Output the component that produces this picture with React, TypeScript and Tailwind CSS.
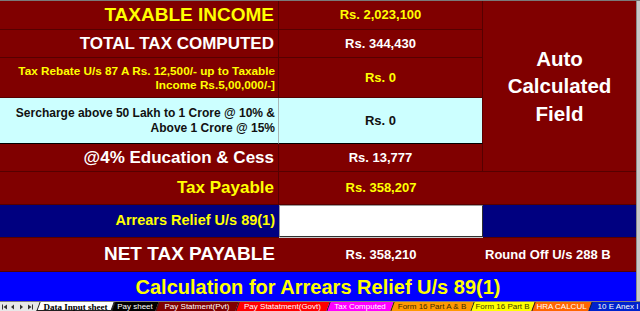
import React from "react";

const tabs: { label: string; w: string; bg: string; fg: string }[] = [
  { label: "Pay sheet", w: "w-[44px]", bg: "bg-black", fg: "text-white" },
  { label: "Pay Statment(Pvt)", w: "w-[80px]", bg: "bg-[#800000]", fg: "text-white" },
  { label: "Pay Statatment(Govt)", w: "w-[91px]", bg: "bg-[#ff0000]", fg: "text-white" },
  { label: "Tax Computed", w: "w-[64px]", bg: "bg-[#ff00ff]", fg: "text-white" },
  { label: "Form 16 Part A & B", w: "w-[80px]", bg: "bg-[#ff9900]", fg: "text-[#3a2a00]" },
  { label: "Form 16 Part B", w: "w-[61px]", bg: "bg-[#ffff00]", fg: "text-[#3a3a00]" },
  { label: "HRA CALCUL", w: "w-[57px]", bg: "bg-[#ff6600]", fg: "text-white" },
  { label: "10 E Anex I", w: "w-[56px]", bg: "bg-[#0022cc]", fg: "text-white" },
];

function Tab({ label, w, bg, fg }: { label: string; w: string; bg: string; fg: string }) {
  return (
    <div className={`relative h-full flex items-center justify-center shrink-0 ${w}`}>
      <div className={`absolute inset-0 -skew-x-[20deg] border-l border-[#202020] ${bg}`} />
      <span className={`relative text-[8px] leading-[10px] font-normal whitespace-nowrap ${fg}`}>{label}</span>
    </div>
  );
}

export default function App() {
  const mar = "bg-[#800000] border-[#560000]";
  return (
    <div className="w-[640px] h-[311px] overflow-hidden bg-[#c8c8c8] font-['Liberation_Sans',Arial,sans-serif] font-bold">
      <div className="h-[1px] bg-[#7a7a7a]" />
      <div className="grid grid-cols-[279px_204px_153px_4px] grid-rows-[29px_28px_40px_46px_28px_33px_33px_34px_29px]">
        {/* Row 1 */}
        <div className={`col-start-1 row-start-1 border-r border-b ${mar} flex items-center justify-end pr-[4px] text-[19px] text-[#ffff00]`}>
          TAXABLE INCOME
        </div>
        <div className={`col-start-2 row-start-1 border-r border-b ${mar} flex items-center justify-center text-[13px] text-[#ffff00]`}>
          Rs. 2,023,100
        </div>
        <div className={`col-start-3 row-start-1 row-span-5 border-b ${mar} flex items-center justify-center text-center text-white text-[20.5px] leading-[27.5px]`}>
          <div>
            Auto
            <br />
            Calculated
            <br />
            Field
          </div>
        </div>
        <div className="col-start-4 row-start-1 row-span-9 bg-[#c8c8c8] border-l border-[#8a8a8a]" />

        {/* Row 2 */}
        <div className={`col-start-1 row-start-2 border-r border-b ${mar} flex items-center justify-end pr-[4px] text-[17px] text-white`}>
          TOTAL TAX COMPUTED
        </div>
        <div className={`col-start-2 row-start-2 border-r border-b ${mar} flex items-center justify-center text-[13px] text-white`}>
          Rs. 344,430
        </div>

        {/* Row 3 */}
        <div className={`col-start-1 row-start-3 border-r border-b ${mar} flex items-center justify-end pr-[3px] text-right text-[11.75px] leading-[14px] text-[#ffff00]`}>
          <div>
            Tax Rebate U/s 87 A Rs. 12,500/- up to Taxable
            <br />
            Income Rs.5,00,000/-]
          </div>
        </div>
        <div className={`col-start-2 row-start-3 border-r border-b ${mar} flex items-center justify-center text-[13px] text-[#ffff00]`}>
          Rs. 0
        </div>

        {/* Row 4 */}
        <div className="col-start-1 row-start-4 bg-[#ccffff] border-r border-r-[#a8b8b8] border-b border-b-black flex items-center justify-end pr-[3px] text-right text-[12px] leading-[15px] text-[#111]">
          <div>
            Sercharge above 50 Lakh to 1 Crore @ 10% &amp;
            <br />
            Above 1 Crore @ 15%
          </div>
        </div>
        <div className="col-start-2 row-start-4 bg-[#ccffff] border-r border-r-[#560000] border-b border-b-black flex items-center justify-center text-[13px] text-[#111]">
          Rs. 0
        </div>

        {/* Row 5 */}
        <div className={`col-start-1 row-start-5 border-r border-b ${mar} flex items-center justify-end pr-[4px] text-[17px] text-white`}>
          @4% Education &amp; Cess
        </div>
        <div className={`col-start-2 row-start-5 border-r border-b ${mar} flex items-center justify-center text-[13px] text-white`}>
          Rs. 13,777
        </div>

        {/* Row 6 */}
        <div className={`col-start-1 row-start-6 border-r border-b ${mar} flex items-center justify-end pr-[4px] text-[17px] text-[#ffff00]`}>
          Tax Payable
        </div>
        <div className={`col-start-2 col-span-2 row-start-6 border-b ${mar} flex items-center`}>
          <div className="w-[204px] text-center text-[13px] text-[#ffff00]">Rs. 358,207</div>
        </div>

        {/* Row 7 */}
        <div className="col-start-1 row-start-7 bg-[#000080] border-b border-[#560000] flex items-center justify-end pr-[4px] text-[14.5px] text-[#ffff00]">
          Arrears Relief U/s 89(1)
        </div>
        <div className="col-start-2 row-start-7 bg-white border border-[#303030] border-t-[#9a9a9a] border-l-[#9a9a9a] mb-[1px]" />
        <div className="col-start-3 row-start-7 bg-[#000080] border-b border-[#560000]" />

        {/* Row 8 */}
        <div className={`col-start-1 row-start-8 border-b ${mar} flex items-center justify-end pr-[4px] text-[19px] text-white`}>
          NET TAX PAYABLE
        </div>
        <div className={`col-start-2 row-start-8 border-b ${mar} flex items-center justify-center text-[13px] text-white`}>
          Rs. 358,210
        </div>
        <div className={`col-start-3 row-start-8 border-b ${mar} flex items-center pl-[2px] text-[13px] text-white`}>
          Round Off U/s 288 B
        </div>

        {/* Row 9 */}
        <div className="col-start-1 col-span-3 row-start-9 bg-[#0000ff] flex items-center justify-center text-[20px] text-[#ffff00]">
          Calculation for Arrears Relief U/s 89(1)
        </div>
      </div>

      {/* Sheet tabs */}
      <div className="h-[10px] flex items-stretch bg-[#e8e8e8] border-t border-[#808080]">
        <div className="w-[38px] shrink-0 flex items-center gap-[4px] pl-[2px]">
          <svg width="32" height="6" viewBox="0 0 32 6">
            <rect x="0" y="0.5" width="1" height="5" fill="#333" />
            <polygon points="5,0.5 5,5.5 1.5,3" fill="#333" />
            <polygon points="12,0.5 12,5.5 9,3" fill="#333" />
            <polygon points="18,0.5 18,5.5 21,3" fill="#333" />
            <polygon points="26,0.5 26,5.5 29.5,3" fill="#333" />
            <rect x="30" y="0.5" width="1" height="5" fill="#333" />
          </svg>
        </div>
        <div className="relative w-[75px] shrink-0 h-full flex items-center justify-center">
          <div className="absolute inset-0 -skew-x-[20deg] bg-white border-l border-r border-b border-[#202020]" />
          <span className="relative text-[9px] leading-[10px] font-['Liberation_Serif',serif] font-bold text-black whitespace-nowrap">
            Data Input sheet
          </span>
        </div>
        {tabs.map((t) => (
          <Tab key={t.label} {...t} />
        ))}
      </div>
    </div>
  );
}
